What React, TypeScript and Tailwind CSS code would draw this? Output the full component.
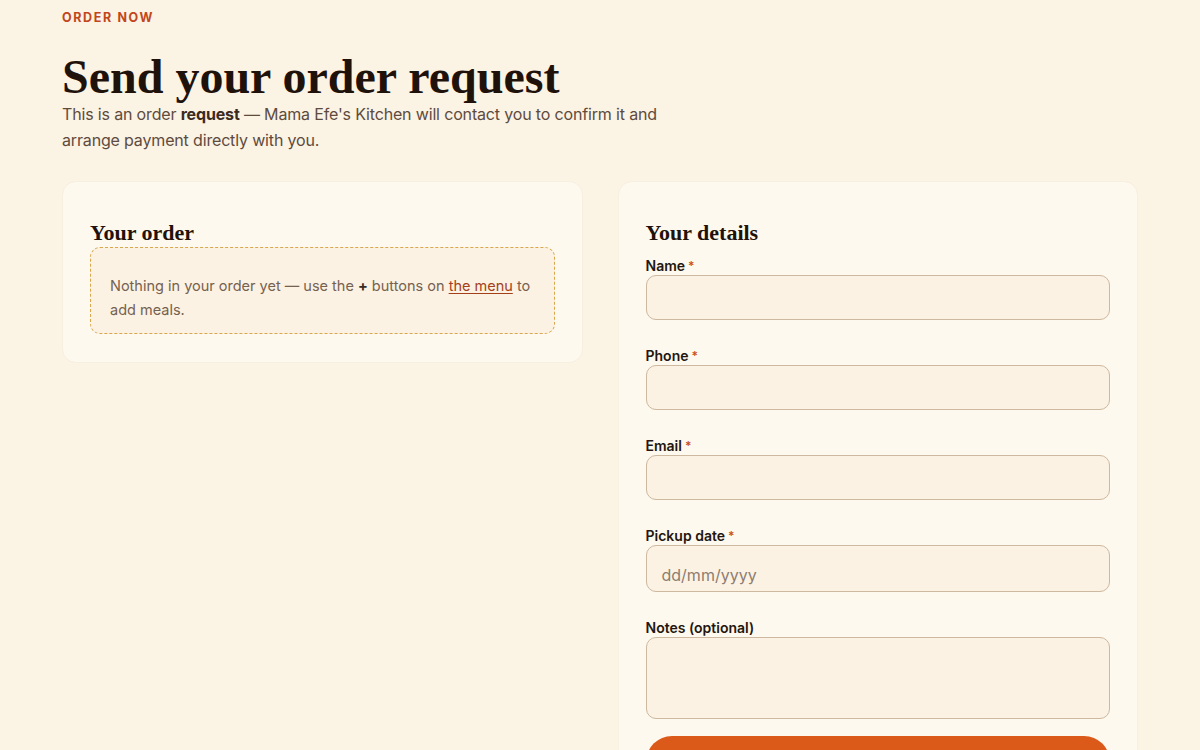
import React from 'react';

const serif = { fontFamily: '"Liberation Serif", "DejaVu Serif", serif' };

const Field: React.FC<{ label: string; required?: boolean; children: React.ReactNode }> = ({ label, required, children }) => (
  <div className="flex flex-col">
    <label className="text-[14px] font-semibold text-[#23160e] leading-[18px]">
      {label}
      {required && <span className="text-[#c8501e] ml-[3px] text-[12px] align-top">*</span>}
    </label>
    {children}
  </div>
);

const inputCls =
  'w-full rounded-[10px] border border-[#cdb8a0] bg-[#fcf2e3] px-[15px] text-[16px] text-[#2a1a10] outline-none';

const App: React.FC = () => {
  return (
    <div
      className="min-h-screen bg-[#fbf3e4] text-[#2a1a10]"
      style={{ fontFamily: 'Inter, "Noto Sans", sans-serif' }}
    >
      <div className="mx-auto w-[1076px] pt-[10px]">
        <p className="text-[12.5px] font-bold tracking-[0.13em] text-[#c2461a] leading-[16px]">ORDER NOW</p>
        <h1 className="mt-[26px] text-[48px] font-bold leading-[49px] text-[#1f120a]" style={serif}>
          Send your order request
        </h1>
        <p className="max-w-[600px] text-[16px] tracking-[-0.01em] leading-[26px] text-[#5e4b3e]">
          This is an order <strong className="font-bold text-[#3b2a1e]">request</strong> — Mama Efe's Kitchen will
          contact you to confirm it and arrange payment directly with you.
        </p>

        <div className="mt-[28px] grid grid-cols-2 gap-[35px] items-start">
          {/* Order summary */}
          <section className="rounded-[14px] border border-[#f7efe0] bg-[#fef9ee] px-[27px] pt-[38px] pb-[28px]">
            <h2 className="text-[22px] font-bold leading-[26px] text-[#1f120a] mb-[1px]" style={serif}>
              Your order
            </h2>
            <div className="rounded-[10px] border border-dashed border-[#d9a84e] bg-[#fcf2e3] px-[19px] pt-[26px] pb-[11px] text-[14.5px] leading-[24px] text-[#75614f]">
              Nothing in your order yet — use the <b className="font-bold text-[#3b2a1e]">+</b> buttons on{' '}
              <a href="#" className="text-[#a3401a] underline underline-offset-2">
                the menu
              </a>{' '}
              to add meals.
            </div>
          </section>

          {/* Customer details */}
          <section className="rounded-[14px] border border-[#f7efe0] bg-[#fef9ee] px-[27px] pt-[38px] pb-[28px]">
            <h2 className="text-[22px] font-bold leading-[26px] text-[#1f120a] mb-[11px]" style={serif}>
              Your details
            </h2>
            <div className="flex flex-col gap-[27px]">
              <Field label="Name" required>
                <input className={`${inputCls} h-[45px]`} />
              </Field>
              <Field label="Phone" required>
                <input className={`${inputCls} h-[45px]`} />
              </Field>
              <Field label="Email" required>
                <input className={`${inputCls} h-[45px]`} />
              </Field>
              <Field label="Pickup date" required>
                <div className={`${inputCls} h-[47px] flex items-end pb-[4px] text-[#8d7d70]`}>dd/mm/yyyy</div>
              </Field>
              <Field label="Notes (optional)">
                <textarea className={`${inputCls} h-[82px] py-[10px] resize-none`} />
              </Field>
              <button className="-mt-[10px] h-[52px] w-full rounded-full bg-[#dc5a19] text-[16px] font-semibold text-white">
                Send order request
              </button>
            </div>
          </section>
        </div>
      </div>
    </div>
  );
};

export default App;
